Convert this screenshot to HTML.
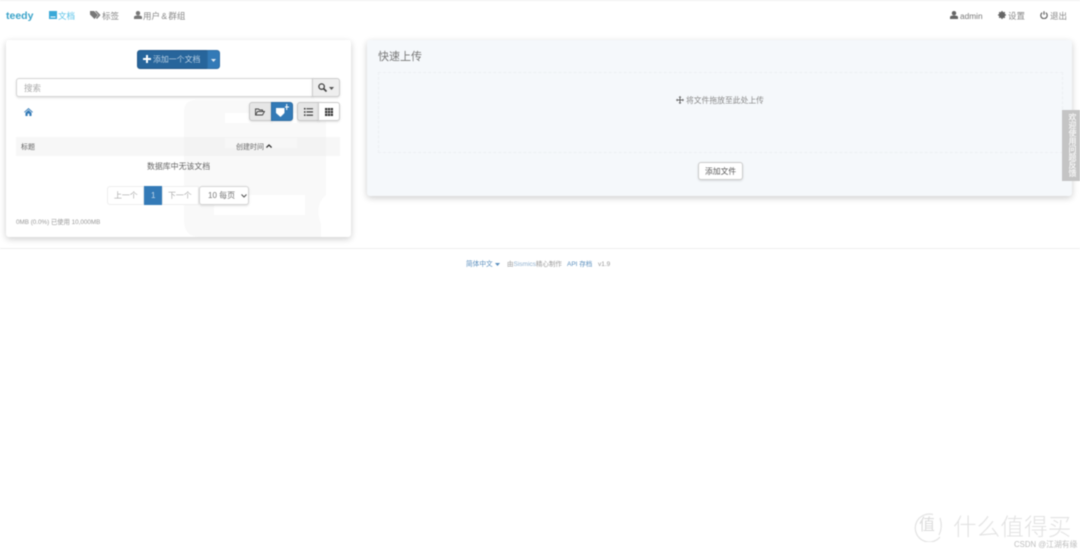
<!DOCTYPE html>
<html lang="zh">
<head>
<meta charset="utf-8">
<title>teedy</title>
<style>
html,body{margin:0;padding:0;background:#fff;width:1080px;height:552px;overflow:hidden}
body{font-family:"Liberation Sans","Noto Sans CJK SC",sans-serif;position:relative;color:#555}
.a{position:absolute;white-space:nowrap;line-height:1}
#wrap{position:absolute;left:0;top:0;width:1080px;height:552px;filter:blur(.5px)}
.panel{position:absolute;border-radius:3px;box-shadow:0 2px 7px rgba(0,0,0,.2)}
svg{position:absolute;display:block}
.nav{font-size:8.500px;color:#888}
.btn{position:absolute;box-sizing:border-box;border:1px solid #ccc;background:#fff;border-radius:3px;box-shadow:0 1px 2px rgba(0,0,0,.12)}
.on{background:#e6e6e6;border-color:#c8c8c8}
</style>
</head>
<body>
<div id="wrap">
<div style="position:absolute;left:0;top:0;width:1080px;height:1px;background:#f0f0f0"></div>

<!-- nav -->
<div class="a" style="left:6px;top:11px;font-size:10.500px;font-weight:bold;color:#3aa3c9">teedy</div>
<svg style="left:49px;top:11px" width="8" height="8" viewBox="0 0 8 8"><path fill="#3aa9d8" d="M0 0h8v8H0zM1.500 5.500v1h5v-1z"/></svg>
<div class="a nav" style="left:58px;top:11.500px;color:#5cc3e8">文档</div>
<svg style="left:90px;top:11px" width="11" height="8" viewBox="0 0 11 8"><path fill="#777" d="M0 0h4l4 4-3.500 4L0 3.500zM5 0h1.500l4 4-3.500 4-1-1 2.500-3z"/></svg>
<div class="a nav" style="left:102px;top:11.500px">标签</div>
<svg style="left:134px;top:11px" width="8" height="8" viewBox="0 0 8 8"><circle cx="4" cy="2.200" r="2.200" fill="#777"/><path fill="#777" d="M0 8V6.200C0 5 1.500 4.500 4 4.500S8 5 8 6.200V8z"/></svg>
<div class="a nav" style="left:143px;top:11.500px;word-spacing:-1px">用户 &amp; 群组</div>

<svg style="left:950px;top:11px" width="8" height="8" viewBox="0 0 8 8"><circle cx="4" cy="2.200" r="2.200" fill="#666"/><path fill="#666" d="M0 8V6.200C0 5 1.500 4.500 4 4.500S8 5 8 6.200V8z"/></svg>
<div class="a nav" style="left:960px;top:11.500px;color:#777;font-size:8.300px">admin</div>
<svg style="left:998px;top:11px" width="8" height="8" viewBox="0 0 8 8"><circle cx="4" cy="4" r="2.400" fill="none" stroke="#666" stroke-width="1.700"/><path stroke="#666" stroke-width="1.300" d="M4 0v8M0 4h8M1.200 1.200l5.600 5.600M6.800 1.200L1.200 6.800"/></svg>
<div class="a nav" style="left:1008px;top:11.500px">设置</div>
<svg style="left:1040px;top:11px" width="8" height="8" viewBox="0 0 8 8"><path fill="none" stroke="#666" stroke-width="1.200" d="M2.200 1.800a3.200 3.200 0 1 0 3.600 0M4 .2v3.600"/></svg>
<div class="a nav" style="left:1050px;top:11.500px">退出</div>

<!-- left panel -->
<div class="panel" style="left:6px;top:40px;width:345px;height:197px;background:#fff;overflow:hidden">
  <svg style="left:178px;top:60px" width="145" height="137" viewBox="0 0 145 137">
    <path fill="#f9f9f9" d="M12 0H130Q142 0 142 12V95Q130 105 137 124V137H16Q0 137 0 120V12Q0 0 12 0z"/>
    <path fill="#fff" d="M41 13h72v10H41zM41 38h72v10H41zM30 95h91v20H30z"/>
  </svg>
</div>

<!-- add button -->
<div style="position:absolute;left:137px;top:50px;width:71px;height:19px;background:#27659b;border:1px solid #245a8a;box-sizing:border-box;border-radius:3px 0 0 3px"></div>
<div style="position:absolute;left:207px;top:50px;width:13px;height:19px;background:#337ab7;border:1px solid #2e6da4;box-sizing:border-box;border-radius:0 3px 3px 0"></div>
<svg style="left:143px;top:55px" width="8" height="8" viewBox="0 0 8 8"><path fill="#fff" d="M3 0h2v3h3v2H5v3H3V5H0V3h3z"/></svg>
<div class="a" style="left:153px;top:56px;font-size:7.900px;color:#b9d0e4">添加一个文档</div>
<svg style="left:211px;top:59px" width="5" height="3" viewBox="0 0 5 3"><path fill="#dfe9f2" d="M0 0h5L2.500 3z"/></svg>

<!-- search -->
<div class="btn" style="left:16px;top:78px;width:297px;height:19px;border-radius:3px 0 0 3px;border-color:#d5d5d5"></div>
<div class="a" style="left:24px;top:84px;font-size:8.500px;color:#aaa">搜索</div>
<div class="btn" style="left:312px;top:78px;width:28px;height:19px;border-radius:0 3px 3px 0;background:#eee;border-color:#ccc"></div>
<svg style="left:318px;top:83px" width="9" height="9" viewBox="0 0 9 9"><circle cx="3.600" cy="3.600" r="2.700" fill="none" stroke="#444" stroke-width="1.300"/><path stroke="#444" stroke-width="1.700" d="M5.600 5.600l2.900 2.900"/></svg>
<svg style="left:329px;top:87px" width="5" height="3" viewBox="0 0 5 3"><path fill="#555" d="M0 0h5L2.500 3z"/></svg>

<!-- home -->
<svg style="left:24px;top:108px" width="9" height="8" viewBox="0 0 10 9"><path fill="#337ab7" d="M5 0l5 4.500-.7.700L5 1.400.7 5.200 0 4.500zM1.600 5.300L5 2.300l3.400 3V9H6V6.300H4V9H1.600z"/></svg>

<!-- toggle buttons -->
<div class="btn on" style="left:249px;top:102px;width:23px;height:19px;border-radius:3px 0 0 3px"></div>
<svg style="left:255px;top:108px" width="10" height="8" viewBox="0 0 10 8"><path fill="none" stroke="#444" stroke-width=".9" d="M.5 7V1h3l1 1h3v1.500M.5 7h7l2-3.500h-7z"/></svg>
<div class="btn" style="left:271px;top:102px;width:22px;height:19px;border-radius:0 3px 3px 0;background:#337ab7;border-color:#2e6da4"></div>
<svg style="left:276px;top:104px" width="13" height="14" viewBox="0 0 13 14"><path fill="#fff" d="M0 4h8.500v5L4.500 13 0 9zM9 2.500h1.200V0h1v2.500H13v1h-1.800V6h-1V3.500H9z"/></svg>

<div class="btn on" style="left:297px;top:102px;width:22px;height:19px;border-radius:3px 0 0 3px"></div>
<svg style="left:304px;top:108px" width="9" height="8" viewBox="0 0 9 8"><path fill="#333" d="M0 0h1.500v1.500H0zM2.500 .2H9v1.100H2.500zM0 3.200h1.500v1.500H0zM2.500 3.400H9v1.100H2.500zM0 6.400h1.500v1.500H0zM2.500 6.600H9v1.100H2.500z"/></svg>
<div class="btn" style="left:318px;top:102px;width:22px;height:19px;border-radius:0 3px 3px 0"></div>
<svg style="left:325px;top:108px" width="8" height="8" viewBox="0 0 8 8"><path fill="#333" d="M0 0h2.300v2.300H0zM2.850 0h2.300v2.300h-2.300zM5.700 0H8v2.300H5.700zM0 2.850h2.300v2.300H0zM2.850 2.850h2.300v2.300h-2.300zM5.700 2.850H8v2.300H5.700zM0 5.700h2.300V8H0zM2.850 5.700h2.300V8h-2.300zM5.700 5.700H8V8H5.700z"/></svg>

<!-- table head -->
<div style="position:absolute;left:16px;top:137px;width:324px;height:19px;background:rgba(235,235,235,.42)"></div>
<div class="a" style="left:21px;top:143.500px;font-size:7px;color:#666">标题</div>
<div class="a" style="left:236px;top:143.500px;font-size:7px;color:#666">创建时间</div>
<svg style="left:266px;top:144px" width="6" height="4" viewBox="0 0 6 4"><path fill="none" stroke="#333" stroke-width="1.300" d="M.4 3.500L3 1l2.600 2.500"/></svg>

<div class="a" style="left:147px;top:163px;font-size:7.900px;color:#666">数据库中无该文档</div>

<!-- pagination -->
<div style="position:absolute;box-sizing:border-box;left:107px;top:186px;width:37px;height:19px;border:1px solid #eee;border-radius:3px 0 0 3px;background:#fff"></div>
<div class="a" style="left:114px;top:192px;font-size:7.900px;color:#aaa">上一个</div>
<div style="position:absolute;left:144px;top:186px;width:18px;height:19px;background:#337ab7"></div>
<div class="a" style="left:151px;top:192px;font-size:8px;color:#c8dcec">1</div>
<div style="position:absolute;box-sizing:border-box;left:162px;top:186px;width:37px;height:19px;border:1px solid #eee;background:#fff"></div>
<div class="a" style="left:168px;top:192px;font-size:7.900px;color:#aaa">下一个</div>
<div class="btn" style="left:199px;top:186px;width:50px;height:19px;border-color:#d5d5d5"></div>
<div class="a" style="left:208px;top:192px;font-size:8px;color:#777">10 每页</div>
<svg style="left:241px;top:194px" width="6" height="4" viewBox="0 0 6 4"><path fill="none" stroke="#555" stroke-width="1.100" d="M.5.500L3 3 5.500.500"/></svg>

<div class="a" style="left:16px;top:219.500px;font-size:6.300px;color:#999">0MB (0.0%) 已使用 10,000MB</div>

<!-- right panel -->
<div class="panel" style="left:367px;top:40px;width:705px;height:156px;background:#f5f8fb"></div>
<div class="a" style="left:378px;top:51.500px;font-size:11px;color:#777">快速上传</div>
<div style="position:absolute;box-sizing:border-box;left:378px;top:72px;width:685px;height:81px;border:1px dashed #edf0f3"></div>
<svg style="left:676px;top:96px" width="8" height="8" viewBox="0 0 8 8"><path fill="#666" d="M4 0l1.500 1.500h-1V3.500h2v-1L8 4 6.500 5.500v-1h-2v2h1L4 8 2.500 6.500h1v-2h-2v1L0 4l1.500-1.500v1h2v-2h-1z"/></svg>
<div class="a" style="left:686px;top:97px;font-size:7.800px;color:#888">将文件拖放至此处上传</div>
<div class="btn" style="left:698px;top:162px;width:45px;height:18px;border-color:#ccc"></div>
<div class="a" style="left:705px;top:168px;font-size:7.800px;color:#555">添加文件</div>

<!-- feedback tab -->
<div style="position:absolute;left:1062px;top:110px;width:18px;height:71px;background:#c4c4c4"></div>
<div class="a" style="left:1067px;top:113px;width:9px;height:65px;writing-mode:vertical-rl;font-size:8px;color:#f4f4f4;font-weight:bold">欢迎使用问题反馈</div>

<!-- footer -->
<div style="position:absolute;left:0;top:248px;width:1080px;height:1px;background:#eee"></div>
<div class="a" style="left:466px;top:261.500px;font-size:6.700px;color:#5b8fbe">简体中文</div>
<svg style="left:495px;top:263px" width="5" height="3" viewBox="0 0 5 3"><path fill="#5b8fbe" d="M0 0h5L2.500 3z"/></svg>
<div class="a" style="left:507px;top:261.500px;font-size:6.500px;color:#999">由<span style="color:#8fb0cf">Sismics</span>精心制作</div>
<div class="a" style="left:567px;top:261.500px;font-size:6.500px;color:#5b8fbe">API 存档</div>
<div class="a" style="left:598px;top:261.500px;font-size:6.500px;color:#999">v1.9</div>

<!-- watermark -->
<svg style="left:912px;top:512px" width="32" height="30" viewBox="0 0 32 30"><path fill="none" stroke="#e2e2e2" stroke-width="1.200" d="M21 2.500A14 14 0 1 0 28 25"/><path fill="none" stroke="#e2e2e2" stroke-width="1.200" d="M28 6q3 9-1 17"/></svg>
<div class="a" style="left:919px;top:518px;font-size:16px;color:#dcdcdc">值</div>
<div class="a" style="left:953px;top:516px;font-size:23.500px;color:#e2e2e2;letter-spacing:.2px;font-weight:300">什么值得买</div>
<div class="a" style="left:1014px;top:541px;font-size:7.800px;color:#bdbdbd">CSDN @江湖有缘</div>
</div>
</body>
</html>
